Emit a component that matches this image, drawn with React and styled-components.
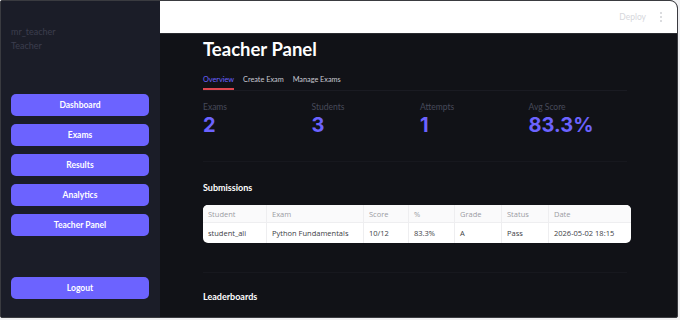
import React from "react";
import styled, { createGlobalStyle } from "styled-components";

const Global = createGlobalStyle`
  html, body { margin: 0; padding: 0; background: #f0f0f2; }
  body { font-family: "Lato", "Noto Sans", sans-serif; }
  * { box-sizing: border-box; }
`;

const Frame = styled.div`
  width: 678px;
  height: 318px;
  display: flex;
  border: 1px solid #3a3b40;
  border-radius: 2px 8px 2px 2px;
  overflow: hidden;
  background: #111217;
`;

const Sidebar = styled.aside`
  width: 159px;
  flex: none;
  background: #1b1d28;
  display: flex;
  flex-direction: column;
  padding: 24px 10px 18px 10px;
`;

const UserName = styled.div`
  color: #3b3e4e;
  font-size: 9px;
  line-height: 14px;
`;

const NavList = styled.nav`
  margin-top: 41px;
  display: flex;
  flex-direction: column;
  gap: 8px;
`;

const NavButton = styled.button`
  height: 22px;
  width: 138px;
  border: none;
  border-radius: 5px;
  background: #6c63ff;
  color: #ffffff;
  font-family: "Lato", sans-serif;
  font-weight: 700;
  font-size: 8.5px;
  padding: 0;
  margin-top: ${(p) => (p.$push ? "auto" : "0")};
`;

const Main = styled.main`
  flex: 1;
  display: flex;
  flex-direction: column;
  min-width: 0;
`;

const Header = styled.header`
  height: 33px;
  flex: none;
  background: #ffffff;
  border-bottom: 1px solid #2a2b30;
  display: flex;
  align-items: center;
  justify-content: flex-end;
  padding-right: 15px;
  gap: 14px;
`;

const Deploy = styled.span`
  color: #d6d7dc;
  font-size: 8.5px;
`;

const Dots = styled.span`
  display: flex;
  flex-direction: column;
  gap: 2px;
  span {
    width: 2px;
    height: 2px;
    border-radius: 1px;
    background: #cfd0d4;
  }
`;

const Content = styled.div`
  padding: 1px 48px 0 43px;
  display: flex;
  flex-direction: column;
`;

const Title = styled.h1`
  margin: 0;
  color: #ffffff;
  font-size: 18.5px;
  font-weight: 700;
  line-height: 28px;
`;

const Tabs = styled.div`
  margin-top: 10px;
  display: flex;
  gap: 9px;
  border-bottom: 1px solid #1a1b22;
  width: 424px;
`;

const Tab = styled.div`
  font-size: 7.3px;
  height: 17px;
  padding-top: 2px;
  color: ${(p) => (p.$active ? "#6c63ff" : "#c9cad2")};
  border-bottom: 2px solid ${(p) => (p.$active ? "#e0474f" : "transparent")};
`;

const Metrics = styled.div`
  margin-top: 10px;
  display: grid;
  grid-template-columns: repeat(4, 108.5px);
`;

const Metric = styled.div`
  display: flex;
  flex-direction: column;
`;

const MetricLabel = styled.div`
  color: #474a5a;
  font-size: 8.5px;
  line-height: 12px;
`;

const MetricValue = styled.div`
  color: #6c63ff;
  font-family: "Inter", sans-serif;
  font-weight: 700;
  font-size: 20px;
  line-height: 24px;
`;

const Divider = styled.div`
  width: 424px;
  height: 1px;
  background: #17181e;
  margin-top: ${(p) => p.$mt}px;
`;

const SectionTitle = styled.h3`
  margin: ${(p) => p.$mt}px 0 0 0;
  color: #ffffff;
  font-size: 9px;
  font-weight: 700;
  line-height: 12px;
`;

const Table = styled.table`
  margin-top: 11px;
  width: 428px;
  border-collapse: separate;
  border-spacing: 0;
  background: #ffffff;
  border-radius: 5px;
  overflow: hidden;
  font-family: "Open Sans", sans-serif;
  font-size: 7.5px;
`;

const Th = styled.th`
  text-align: left;
  font-weight: 400;
  color: #9a9ca3;
  height: 18px;
  padding: 0 5px;
  background: #fafafb;
  border-bottom: 1px solid #eeeef0;
  border-right: 1px solid #eeeef0;
  width: ${(p) => p.$w}px;
  &:last-child { border-right: none; }
`;

const Td = styled.td`
  color: #3c3e45;
  height: 20px;
  padding: 0 5px;
  border-right: 1px solid #eeeef0;
  &:last-child { border-right: none; }
`;

const cols = [
  ["Student", 64],
  ["Exam", 97],
  ["Score", 45],
  ["%", 46],
  ["Grade", 47],
  ["Status", 47],
  ["Date", 82],
];
const row = ["student_ali", "Python Fundamentals", "10/12", "83.3%", "A", "Pass", "2026-05-02 18:15"];

const navItems = ["Dashboard", "Exams", "Results", "Analytics", "Teacher Panel"];

export default function App() {
  return (
    <>
      <Global />
      <Frame>
        <Sidebar>
          <UserName>mr_teacher</UserName>
          <UserName>Teacher</UserName>
          <NavList>
            {navItems.map((n) => (
              <NavButton key={n}>{n}</NavButton>
            ))}
          </NavList>
          <NavButton $push>Logout</NavButton>
        </Sidebar>
        <Main>
          <Header>
            <Deploy>Deploy</Deploy>
            <Dots>
              <span />
              <span />
              <span />
            </Dots>
          </Header>
          <Content>
            <Title>Teacher Panel</Title>
            <Tabs>
              <Tab $active>Overview</Tab>
              <Tab>Create Exam</Tab>
              <Tab>Manage Exams</Tab>
            </Tabs>
            <Metrics>
              {[
                ["Exams", "2"],
                ["Students", "3"],
                ["Attempts", "1"],
                ["Avg Score", "83.3%"],
              ].map(([l, v]) => (
                <Metric key={l}>
                  <MetricLabel>{l}</MetricLabel>
                  <MetricValue>{v}</MetricValue>
                </Metric>
              ))}
            </Metrics>
            <Divider $mt={24} />
            <SectionTitle $mt={20}>Submissions</SectionTitle>
            <Table>
              <thead>
                <tr>
                  {cols.map(([c, w]) => (
                    <Th key={c} $w={w}>{c}</Th>
                  ))}
                </tr>
              </thead>
              <tbody>
                <tr>
                  {row.map((c, i) => (
                    <Td key={i}>{c}</Td>
                  ))}
                </tr>
              </tbody>
            </Table>
            <Divider $mt={29} />
            <SectionTitle $mt={18}>Leaderboards</SectionTitle>
          </Content>
        </Main>
      </Frame>
    </>
  );
}
